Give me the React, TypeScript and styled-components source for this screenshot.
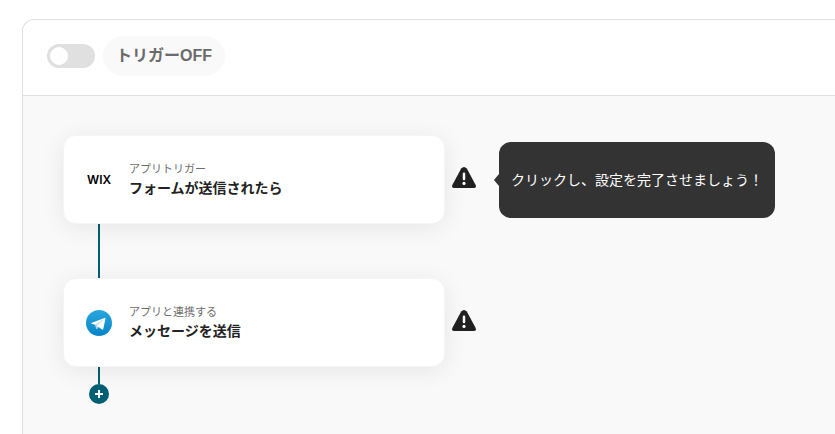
import React, { useState } from "react";
import styled, { createGlobalStyle } from "styled-components";

const GlobalStyle = createGlobalStyle`
  *, *::before, *::after { box-sizing: border-box; }
  body {
    margin: 0;
    background: #fff;
    color: #222;
    font-family: "Liberation Sans", "Noto Sans CJK JP", sans-serif;
  }
  button { font: inherit; color: inherit; border: 0; padding: 0; background: none; cursor: pointer; }
`;

const Page = styled.main`
  display: flex;
  min-height: 100vh;
  padding: 19px 0 0 22px;
`;

const Panel = styled.section`
  flex: 1;
  display: flex;
  flex-direction: column;
  min-width: 0;
  border: 1px solid #e0e0e0;
  border-width: 1px 0 0 1px;
  border-radius: 12px 0 0 0;
  overflow: hidden;
`;

const Header = styled.header`
  display: flex;
  align-items: center;
  gap: 8px;
  padding: 16px 24px 19px;
  border-bottom: 1px solid #e0e0e0;
`;

const Switch = styled.input`
  appearance: none;
  display: flex;
  align-items: center;
  width: 48px;
  height: 24px;
  margin: 0;
  padding: 3px;
  border-radius: 12px;
  background: #e0e0e0;
  cursor: pointer;

  &::before {
    content: "";
    width: 18px;
    height: 18px;
    border-radius: 50%;
    background: #fff;
  }
  &:checked { justify-content: flex-end; background: #005f73; }
`;

const StatusPill = styled.label`
  padding: 8px 13px;
  border-radius: 20px;
  background: #f9f9f9;
  color: #6b6b6b;
  font-size: 16px;
  font-weight: 700;
  line-height: 24px;
`;

const Canvas = styled.div`
  flex: 1;
  padding: 39px 40px 30px;
  background: #f9f9f9;
`;

const StepRow = styled.div`
  display: flex;
  align-items: center;
`;

const StepCard = styled.button`
  && {
    display: flex;
    align-items: center;
    gap: 17px;
    width: 382px;
    padding: 24px 22px 23px;
    border: 1px solid #f5f5f5;
    border-radius: 13px;
    background: #fff;
    box-shadow: 0 4px 24px rgba(0, 0, 0, 0.08);
    text-align: left;
  }
`;

const AppIcon = styled.span`
  display: flex;
  align-items: center;
  justify-content: center;
  width: 26px;
  height: 26px;
`;

const WixMark = styled.span`
  color: #000;
  font-family: Inter, sans-serif;
  font-size: 12px;
  font-weight: 600;
  line-height: 12px;
`;

const StepText = styled.span`
  display: flex;
  flex-direction: column;
  padding-bottom: 2px;
`;

const StepKind = styled.span`
  color: #6b6b6b;
  font-size: 11px;
  line-height: 18px;
`;

const StepTitle = styled.span`
  color: #222;
  font-size: 14px;
  font-weight: 700;
  line-height: 20px;
`;

const WarningButton = styled.button`
  display: flex;
  width: 24px;
  height: 24px;
  margin-left: 7px;
  margin-bottom: 4px;
`;

const Tooltip = styled.div`
  position: relative;
  margin-left: 23px;
  padding: 26px 12px;
  border-radius: 12px;
  background: #333;
  color: #fff;
  font-size: 14px;
  line-height: 24px;
  white-space: nowrap;

  &::before {
    content: "";
    position: absolute;
    top: 50%;
    right: 100%;
    margin-top: -6px;
    border: 6px solid transparent;
    border-left-width: 0;
    border-right: 5px solid #333;
  }
`;

const Connector = styled.div<{ $length: number }>`
  width: 2px;
  height: ${(p) => p.$length}px;
  margin-left: 35px;
  background: #005f73;
`;

const AddButton = styled.button`
  && {
    display: flex;
    align-items: center;
    justify-content: center;
    width: 20px;
    height: 20px;
    margin-left: 26px;
    border-radius: 50%;
    background: #005f73;
  }
`;

const WarningIcon = () => (
  <svg width="24" height="24" viewBox="0 0 24 24" aria-hidden="true">
    <path
      d="M9.200 2.600Q12-.8 14.800 2.600L23.400 18.500Q25 22 21.600 22H2.400Q-1 22 .6 18.500Z"
      fill="#202020"
    />
    <path d="M12 7.700v5.300" stroke="#fff" strokeWidth="2.500" strokeLinecap="round" />
    <circle cx="12" cy="17.400" r="1.600" fill="#fff" />
  </svg>
);

const TelegramIcon = () => (
  <svg width="26" height="26" viewBox="0 0 240 240" aria-hidden="true">
    <defs>
      <linearGradient id="telegram-sky" x1="0" y1="0" x2="0" y2="1">
        <stop offset="0" stopColor="#2aa7df" />
        <stop offset="1" stopColor="#0784c6" />
      </linearGradient>
    </defs>
    <circle cx="120" cy="120" r="120" fill="url(#telegram-sky)" />
    <path d="M98 175c-4 0-3-1.500-4.600-5.200L82 132l88-52" fill="#c8daea" />
    <path d="M98 175c3 0 4.300-1.400 6-3l16-15.600-20-12" fill="#a9c9dd" />
    <path
      d="M100 144.400l48.400 35.700c5.500 3 9.500 1.500 10.900-5.100l19.700-92.800c2-8.100-3.100-11.700-8.400-9.300L54.900 117.500c-7.900 3.200-7.800 7.600-1.400 9.500l29.700 9.300 68.700-43.300c3.200-2 6.200-.9 3.800 1.300"
      fill="#fff"
    />
  </svg>
);

const PlusIcon = () => (
  <svg width="8" height="8" viewBox="0 0 8 8" aria-hidden="true">
    <path d="M4 0v8M0 4h8" stroke="#fff" strokeWidth="2" />
  </svg>
);

type StepProps = {
  icon: React.ReactNode;
  kind: string;
  title: string;
  hint?: string;
};

const Step = ({ icon, kind, title, hint }: StepProps) => (
  <StepRow>
    <StepCard type="button">
      <AppIcon>{icon}</AppIcon>
      <StepText>
        <StepKind>{kind}</StepKind>
        <StepTitle>{title}</StepTitle>
      </StepText>
    </StepCard>
    <WarningButton type="button" aria-label="設定が未完了です">
      <WarningIcon />
    </WarningButton>
    {hint && <Tooltip role="tooltip">{hint}</Tooltip>}
  </StepRow>
);

export default function App() {
  const [enabled, setEnabled] = useState(false);

  return (
    <>
      <GlobalStyle />
      <Page>
        <Panel>
          <Header>
            <Switch
              id="trigger"
              type="checkbox"
              role="switch"
              checked={enabled}
              onChange={(e) => setEnabled(e.target.checked)}
            />
            <StatusPill htmlFor="trigger">トリガー{enabled ? "ON" : "OFF"}</StatusPill>
          </Header>
          <Canvas>
            <Step
              icon={<WixMark>WIX</WixMark>}
              kind="アプリトリガー"
              title="フォームが送信されたら"
              hint="クリックし、設定を完了させましょう！"
            />
            <Connector $length={54} />
            <Step icon={<TelegramIcon />} kind="アプリと連携する" title="メッセージを送信" />
            <Connector $length={17} />
            <AddButton type="button" aria-label="ステップを追加">
              <PlusIcon />
            </AddButton>
          </Canvas>
        </Panel>
      </Page>
    </>
  );
}
